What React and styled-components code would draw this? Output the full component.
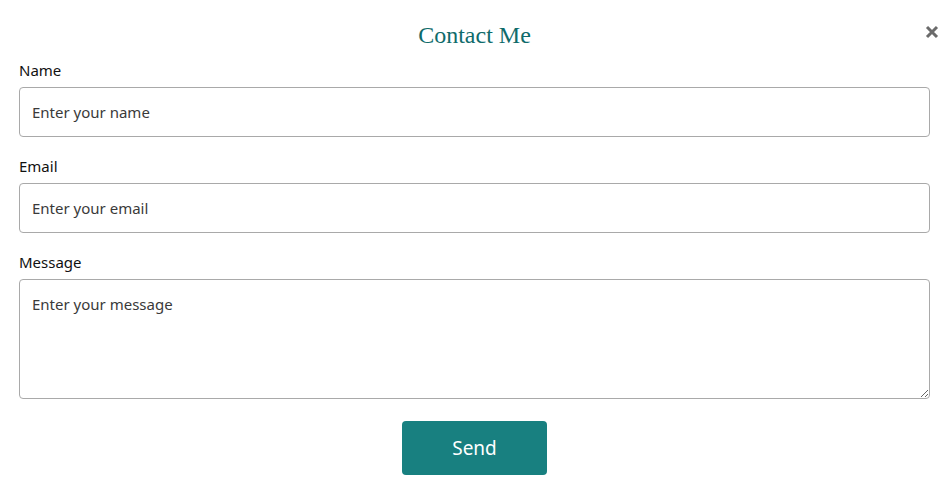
import React from "react";
import styled, { createGlobalStyle } from "styled-components";

const Global = createGlobalStyle`
  html, body { margin: 0; padding: 0; background: #fff; }
  body { font-family: "Noto Sans", "Open Sans", sans-serif; }
  * { box-sizing: border-box; }
`;

const Modal = styled.div`
  position: relative;
  width: 949px;
  padding: 20px 19px 19px;
  background: #fff;
`;

const Title = styled.h2`
  margin: 0;
  text-align: center;
  font-family: "Liberation Serif", "DejaVu Serif", serif;
  font-weight: 400;
  font-size: 24px;
  line-height: 30px;
  color: #0f6b6b;
`;

const Close = styled.button`
  position: absolute;
  top: 18px;
  right: 7px;
  border: none;
  background: none;
  padding: 0;
  width: 20px;
  height: 28px;
  display: flex;
  align-items: center;
  justify-content: center;
  cursor: pointer;
`;

const Form = styled.form`
  display: flex;
  flex-direction: column;
  margin-top: 10px;
`;

const Field = styled.div`
  display: flex;
  flex-direction: column;
  gap: 7px;
  margin-bottom: 19px;
  &:last-of-type { margin-bottom: 22px; }
`;

const Label = styled.label`
  font-size: 15px;
  line-height: 20px;
  color: #111;
`;

const Input = styled.input`
  width: 100%;
  height: 50px;
  border: 1px solid #a9a9a9;
  border-radius: 4px;
  padding: 0 12px;
  font-family: inherit;
  font-size: 15px;
  color: #333;
  &::placeholder { color: #3a3a3a; }
  outline: none;
`;

const TextArea = styled.textarea`
  width: 100%;
  height: 120px;
  border: 1px solid #a9a9a9;
  border-radius: 4px;
  padding: 14px 12px;
  font-family: inherit;
  font-size: 15px;
  line-height: 20px;
  color: #333;
  resize: vertical;
  display: block;
  &::placeholder { color: #3a3a3a; }
  outline: none;
`;

const Send = styled.button`
  align-self: center;
  width: 145px;
  height: 54px;
  border: none;
  border-radius: 4px;
  background: #188080;
  color: #fff;
  font-family: inherit;
  font-size: 19px;
  cursor: pointer;
`;

export default function App() {
  return (
    <>
      <Global />
      <Modal>
        <Title>Contact Me</Title>
        <Close aria-label="Close">
          <svg width="14" height="14" viewBox="0 0 14 14">
            <path d="M2 2 L12 12 M12 2 L2 12" stroke="#6b6b6b" strokeWidth="3" strokeLinecap="butt" />
          </svg>
        </Close>
        <Form onSubmit={(e) => e.preventDefault()}>
          <Field>
            <Label htmlFor="name">Name</Label>
            <Input id="name" placeholder="Enter your name" />
          </Field>
          <Field>
            <Label htmlFor="email">Email</Label>
            <Input id="email" placeholder="Enter your email" />
          </Field>
          <Field>
            <Label htmlFor="msg">Message</Label>
            <TextArea id="msg" placeholder="Enter your message" />
          </Field>
          <Send type="submit">Send</Send>
        </Form>
      </Modal>
    </>
  );
}
